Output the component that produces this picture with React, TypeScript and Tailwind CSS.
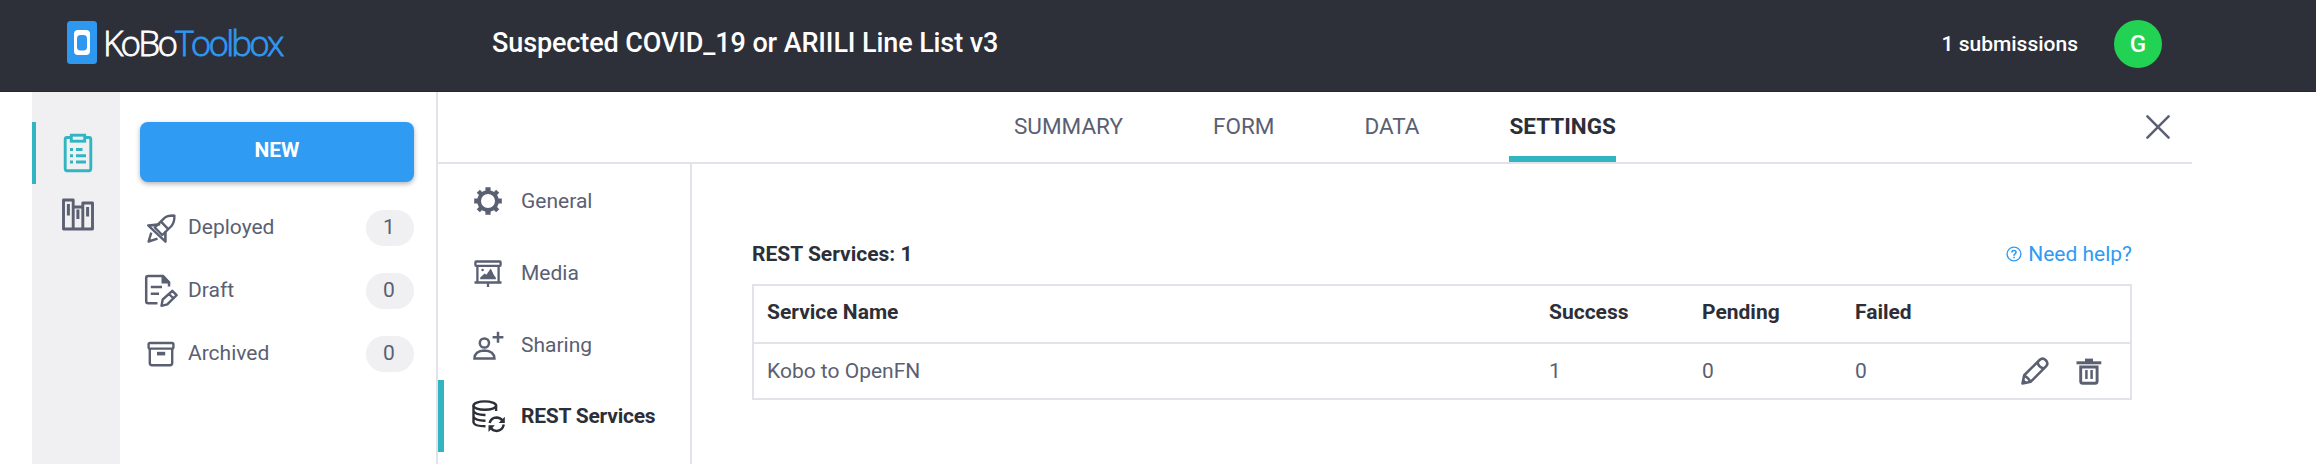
import type { ReactNode } from "react";

type IconProps = { className?: string };

function KoboMark() {
  return (
    <svg width="30" height="43" viewBox="0 0 30 43" className="shrink-0">
      <rect width="30" height="43" rx="3.5" fill="#2e98f1" />
      <rect x="7" y="9" width="16" height="25" rx="4" fill="#fff" />
      <rect x="10" y="14" width="10" height="15.5" rx="3.5" fill="#2e98f1" />
    </svg>
  );
}

function ClipboardIcon() {
  return (
    <svg width="30" height="40" viewBox="0 0 30 40" fill="none" stroke="currentColor" strokeWidth="2.9">
      <path d="M8 4.5H4Q2.2 4.5 2.2 6.5V35.5Q2.2 37.7 4 37.7H26Q27.8 37.7 27.8 35.5V6.5Q27.8 4.5 26 4.5H22" />
      <rect x="8.3" y="2.2" width="13.4" height="6" />
      <path d="M7 16.5h3M13 16.5h6.5M7 22.7h3M13 22.7h10M7 29h3M13 29h10" strokeWidth="2.9" />
    </svg>
  );
}

function BooksIcon() {
  return (
    <svg width="32" height="33" viewBox="0 0 32 33" fill="none" stroke="currentColor" strokeWidth="2.9" strokeLinejoin="round">
      <path d="M1.5 2H11.2V31H1.5zM11.2 9H20.8V31H11.2zM20.8 5H30.5V31H20.8z" />
      <path d="M6.4 6V17.5M15.9 11.5V21M25.6 9V18.5" strokeWidth="3" />
    </svg>
  );
}

function RocketIcon() {
  return (
    <svg width="29" height="29" viewBox="0 0 29 29" fill="none" stroke="currentColor" strokeWidth="2.4" strokeLinejoin="round">
      <path d="M7.8 13.5 17 4.3Q20.5 1.3 27.4 1.6Q27.6 8.3 24.5 12L15.3 21Z" />
      <path d="M13.2 10.2 1.2 11.4 18.5 27.7V17.6M14 7.6 21 14.8M2 11.4H10.2M18.3 27.3V17.8" />
      <path d="M4.3 18.6 1.6 27.5 10.5 24.6" />
    </svg>
  );
}

function DraftIcon() {
  return (
    <svg width="34" height="34" viewBox="0 0 34 34" fill="none" stroke="currentColor" strokeWidth="2.5">
      <path d="M13.5 29.3H4.2Q2.2 29.3 2.2 27.3V4Q2.2 2 4.2 2H19L25 8.5V12.5" />
      <path d="M17.5 1H19.5L26.2 8V9.5H17.5z" fill="currentColor" stroke="none" />
      <path d="M6.8 13H18M6.8 19.8H15" />
      <path d="M17.5 31.8 18.7 25.5 28.3 16.8 32.6 21.1 23.3 30.3zM25 20 29 24" strokeWidth="2.4" strokeLinejoin="round" />
    </svg>
  );
}

function ArchiveIcon() {
  return (
    <svg width="28" height="26" viewBox="0 0 28 26" fill="none" stroke="currentColor" strokeWidth="2.4">
      <rect x="1.6" y="2" width="24.8" height="5.6" rx="1.3" />
      <path d="M2.8 7.5V22Q2.8 24.2 5 24.2H23Q25.2 24.2 25.2 22V7.5" />
      <path d="M10 12.6H18.2" strokeWidth="3.6" />
    </svg>
  );
}

function GearIcon() {
  return (
    <svg width="28" height="28" viewBox="-14 -14 28 28" fill="none" stroke="currentColor">
      <circle r="8.9" strokeWidth="3.8" />
      <path d="M0-9.5V-13.8M0 9.5V13.8M-9.5 0H-13.8M9.5 0H13.8" strokeWidth="5.2" />
      <path d="M-6.5-6.5-9.7-9.7M6.5-6.5 9.7-9.7M-6.5 6.5-9.7 9.7M6.5 6.5 9.7 9.7" strokeWidth="4.4" />
    </svg>
  );
}

function MediaIcon() {
  return (
    <svg width="28" height="27" viewBox="0 0 28 27" fill="none" stroke="currentColor" strokeWidth="2.3">
      <rect x="1.4" y="1.5" width="25.2" height="4.3" rx=".8" />
      <path d="M3.4 6V22M24.6 6V22M.5 22.5H27.5M14 22.5V27" />
      <path d="M6.2 19.3V17.6L10.6 13.4 12.3 14.8 16.8 8.6 20 15.3 21.8 17.4V19.3z" fill="currentColor" stroke="none" />
      <circle cx="8.6" cy="10" r="1.3" fill="currentColor" stroke="none" />
    </svg>
  );
}

function SharingIcon() {
  return (
    <svg width="31" height="29" viewBox="0 0 31 29" fill="none" stroke="currentColor" strokeWidth="2.5">
      <circle cx="11.4" cy="12" r="4.6" />
      <path d="M1.5 27.4Q1.8 19.6 11.4 19.4Q21 19.6 21.4 27.4z" />
      <path d="M19.6 6.3H30.4M25 .8V11.8" />
    </svg>
  );
}

function DatabaseSyncIcon() {
  return (
    <svg width="33" height="33" viewBox="0 0 33 33" fill="none" stroke="currentColor" strokeWidth="2.4">
      <ellipse cx="12.8" cy="5.6" rx="11.3" ry="4.2" />
      <path d="M1.5 5.6V22.5Q2.5 26.2 13.5 26.3M24.1 5.6V11M1.5 11.2Q4 15.2 13.5 15M1.5 16.9Q4 20.9 13.5 20.7" />
      <path d="M17.6 23Q19 17.6 24.6 17.4Q28.3 17.4 30.5 20.5M31.8 24.5Q30.5 30.7 24.6 30.9Q20.8 30.9 18.6 27.6" strokeWidth="2.5" />
      <path d="M32.8 16.8V23H26.6zM16.5 32V25.3H22.8z" fill="currentColor" stroke="none" />
    </svg>
  );
}

function HelpIcon() {
  return (
    <svg width="16" height="16" viewBox="0 0 16 16" fill="none" stroke="currentColor" strokeWidth="1.4">
      <circle cx="8" cy="8" r="6.9" />
      <path d="M5.9 6.5Q6 4.5 8 4.5Q10 4.5 10 6.3Q10 7.3 9 7.9Q8 8.5 8 9.7M8 10.7V12.2" strokeWidth="1.6" />
    </svg>
  );
}

function PencilIcon() {
  return (
    <svg width="28" height="28" viewBox="0 0 28 28" fill="none" stroke="currentColor" strokeWidth="2.6" strokeLinejoin="round">
      <path d="M1.5 26.5 3.2 18.2 18.6 3Q21.6.2 24.8 3.2Q27.8 6.4 25 9.4L9.8 24.7z" />
      <path d="M16.6 5.2Q17.5 10.4 22.8 11.4M3.4 18.6Q7 20.5 9.4 24.4" />
      <path d="M1 27 2 21.5 6.5 26z" fill="currentColor" stroke="none" />
    </svg>
  );
}

function TrashIcon() {
  return (
    <svg width="26" height="27" viewBox="0 0 26 27" fill="none" stroke="currentColor">
      <path d="M.5 4.8H25.3" strokeWidth="3" />
      <path d="M9 2.4H17" strokeWidth="3.6" />
      <path d="M4.7 9H21.1V23.2Q21.1 25.3 19 25.3H6.8Q4.7 25.3 4.7 23.2z" strokeWidth="2.9" />
      <path d="M10.4 12V21M15.6 12V21" strokeWidth="2.5" />
    </svg>
  );
}

function CloseIcon({ className }: IconProps) {
  return (
    <svg width="24" height="24" viewBox="0 0 24 24" fill="none" stroke="currentColor" strokeWidth="2.5" strokeLinecap="round" className={className}>
      <path d="M1.4 1.4 22.6 22.6M22.6 1.4 1.4 22.6" />
    </svg>
  );
}

function Filter({ icon, label, count }: { icon: ReactNode; label: string; count: number }) {
  return (
    <div className="flex h-9 items-center">
      <span className="flex w-[42px] shrink-0 justify-center">{icon}</span>
      <span className="ml-1.5 flex-1 pb-0.5">{label}</span>
      <span className="h-9 w-12 rounded-full bg-[#f0f0f2] pr-0.5 text-center leading-[35px]">{count}</span>
    </div>
  );
}

function SideTab({ icon, label, active }: { icon: ReactNode; label: string; active?: boolean }) {
  return (
    <div
      className={
        active
          ? "flex h-[72px] items-center border-l-6 border-[#30b5c1] font-bold tracking-[-0.22px] text-[#2d2f38]"
          : "flex h-[72px] items-center border-l-6 border-transparent pt-0.5"
      }
    >
      <span className="flex w-[88px] shrink-0 justify-center">{icon}</span>
      <span className="-ml-[11px]">{label}</span>
    </div>
  );
}

const grid = "grid grid-cols-[782px_153px_153px_1fr] items-center pl-[13px]";

export default function App() {
  return (
    <div className="flex h-[464px] w-[2316px] flex-col overflow-hidden bg-white font-['Roboto',sans-serif] text-[21px] leading-6 text-[#5a6072]">
      <header className="flex h-[92px] shrink-0 items-center border-b border-[#25272f] bg-[#2e3039] text-white">
        <div className="flex w-[425px] shrink-0 items-center pb-1.5 pl-[67px]">
          <KoboMark />
          <span className="ml-1.5 whitespace-nowrap font-['Open_Sans','Noto_Sans',sans-serif] text-[35px] font-light leading-[43px] tracking-[-2.8px] [-webkit-text-stroke:0.8px_currentColor]">
            KoBo<span className="text-[#2e98f1]">Toolbox</span>
          </span>
        </div>
        <h1 className="ml-[67px] flex-1 pb-1.5 text-[27px] font-medium leading-8 tracking-[-0.11px]">
          Suspected COVID_19 or ARIILI Line List v3
        </h1>
        <span className="pb-1 font-medium">1 submissions</span>
        <div className="mr-[154px] mb-[3px] ml-9 flex size-12 items-center justify-center rounded-full bg-[#22d253] text-2xl font-medium">
          G
        </div>
      </header>

      <div className="flex flex-1 pr-[124px] pl-8">
        <nav className="flex w-[88px] shrink-0 flex-col bg-[#f0f0f2] pt-[30px]">
          <div className="flex h-[62px] items-center border-l-4 border-[#30b5c1] pb-px pl-[27px] text-[#30b5c1]">
            <ClipboardIcon />
          </div>
          <div className="flex h-[62px] items-center pb-0.5 pl-[30px]">
            <BooksIcon />
          </div>
        </nav>

        <aside className="flex w-[318px] shrink-0 flex-col border-r-2 border-[#e2e2e8] pt-[30px] pr-[22px] pl-5">
          <button className="h-[60px] rounded-lg bg-[#2f9bf2] pb-1 font-bold text-white shadow-[0_2px_5px_rgba(0,0,0,0.3)]">
            NEW
          </button>
          <div className="mt-7 flex flex-col gap-[27px]">
            <Filter icon={<RocketIcon />} label="Deployed" count={1} />
            <Filter icon={<DraftIcon />} label="Draft" count={0} />
            <Filter icon={<ArchiveIcon />} label="Archived" count={0} />
          </div>
        </aside>

        <main className="flex flex-1 flex-col">
          <div className="flex h-[72px] shrink-0 items-stretch border-b-2 border-[#e2e2e8] text-[22.5px] leading-[68px]">
            <div className="flex flex-1 gap-[90px] pl-[576px]">
              <span>SUMMARY</span>
              <span>FORM</span>
              <span>DATA</span>
              <span className="border-b-6 border-[#30b5c1] font-bold text-[#2d2f38]">SETTINGS</span>
            </div>
            <CloseIcon className="mt-[23px] mr-[22px]" />
          </div>

          <div className="flex flex-1">
            <div className="w-[254px] shrink-0 border-r-2 border-[#e2e2e8]">
              <SideTab icon={<GearIcon />} label="General" />
              <SideTab icon={<MediaIcon />} label="Media" />
              <SideTab icon={<SharingIcon />} label="Sharing" />
              <SideTab icon={<DatabaseSyncIcon />} label="REST Services" active />
            </div>

            <section className="flex-1 pt-[78px] pr-[60px] pl-[60px]">
              <div className="flex items-center justify-between">
                <h2 className="font-bold text-[#2d2f38]">REST Services: 1</h2>
                <a className="flex items-center gap-1.5 text-[#2f9bf2]">
                  <HelpIcon />
                  Need help?
                </a>
              </div>
              <div className="mt-[18px] border-2 border-[#e2e2e8]">
                <div className={`${grid} h-[58px] border-b-2 border-[#e2e2e8] pb-1 font-bold text-[#2d2f38]`}>
                  <span>Service Name</span>
                  <span>Success</span>
                  <span>Pending</span>
                  <span>Failed</span>
                </div>
                <div className={`${grid} h-[54px]`}>
                  <span>Kobo to OpenFN</span>
                  <span>1</span>
                  <span>0</span>
                  <span className="flex items-center">
                    <span className="flex-1">0</span>
                    <span className="mr-7 flex items-center gap-[27px]">
                      <PencilIcon />
                      <TrashIcon />
                    </span>
                  </span>
                </div>
              </div>
            </section>
          </div>
        </main>
      </div>
    </div>
  );
}
